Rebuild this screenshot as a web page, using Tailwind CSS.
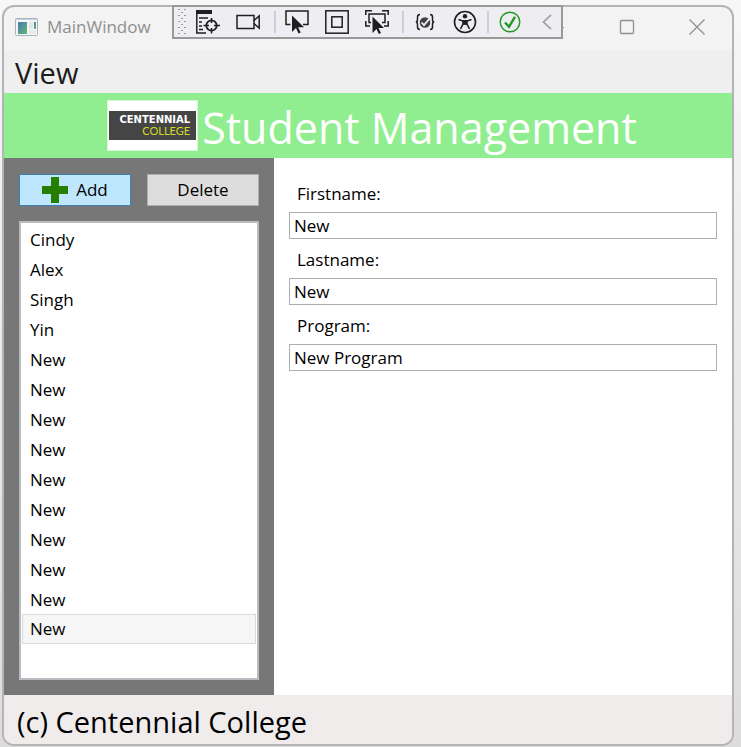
<!DOCTYPE html>
<html lang="en">
<head>
<meta charset="utf-8">
<title>MainWindow</title>
<script src="https://cdn.jsdelivr.net/npm/@tailwindcss/browser@4"></script>
</head>
<body class="flex min-h-screen flex-col bg-linear-to-b from-[#f7f7f7] to-[#dcdcdc] pt-[5px] pr-[7px] pb-px pl-[2px] font-['Open_Sans','Noto_Sans',sans-serif] text-[17px] text-black">
<div class="relative flex flex-1 flex-col rounded-xl border-2 border-[#b4b4b4] bg-[#f3f3f3]">
  <header class="flex h-[43px] items-center pb-[3px] pl-[11px] text-[#8f8f8f]">
    <svg class="mr-[9px] h-5 w-[23px]" viewBox="0 0 23 20" aria-hidden="true">
      <defs><linearGradient id="pane" x1="0" y1="0" x2="1" y2="1"><stop offset="0" stop-color="#4a79ad"/><stop offset="1" stop-color="#62b878"/></linearGradient></defs>
      <rect x=".5" y="1.5" width="22" height="17" rx="1" fill="#f5f6f7" stroke="#a9b3bc"/>
      <path d="M1 2.5h21" stroke="#c9d0d8"/>
      <rect x="3" y="5" width="9" height="12" fill="url(#pane)"/>
      <rect x="14" y="5" width="4" height="7" fill="#e6e6e6"/><rect x="19" y="5" width="2" height="7" fill="url(#pane)"/>
      <rect x="14" y="13" width="7" height="4" fill="#e9e9e9"/>
    </svg>
    <h1 class="flex-1 text-[17px]">MainWindow</h1>
    <button class="flex h-full w-[70px] items-center justify-center" aria-label="Minimize"><svg class="h-4 w-4" viewBox="0 0 16 16" stroke="currentColor"><path d="M0 8.5h16"/></svg></button>
    <button class="flex h-full w-[71px] items-center justify-center" aria-label="Maximize"><svg class="h-4 w-4" viewBox="0 0 16 16" fill="none" stroke="currentColor" stroke-width="1.3"><rect x="1.5" y="1.5" width="13" height="13" rx="1"/></svg></button>
    <button class="flex h-full w-[70px] items-center justify-center" aria-label="Close"><svg class="h-4 w-4" viewBox="0 0 16 16" stroke="currentColor" stroke-width="1.3"><path d="M.5 .5l15 15M15.500 .5l-15 15"/></svg></button>
  </header>

  <div class="absolute -top-0.5 left-[168px] flex h-[34px] items-center border-2 border-[#999] bg-[#eeeef2] pl-1 text-[#1f1f1f]" role="toolbar" aria-label="Debug tools">
    <svg class="mr-0.5 h-[26px] w-2" viewBox="0 0 8 26" aria-hidden="true">
      <defs><pattern id="grip" width="6" height="6" patternUnits="userSpaceOnUse"><rect width="2" height="1" fill="#999"/><rect x="3" y="3" width="2" height="1" fill="#999"/></pattern></defs>
      <rect width="8" height="26" fill="url(#grip)"/>
    </svg>
    <button class="flex h-7 w-10 items-center justify-center" aria-label="Live visual tree"><svg class="h-6 w-6" viewBox="0 0 24 24" fill="none" stroke="currentColor" stroke-width="1.500"><path d="M0 0h16v4H0z" fill="currentColor" stroke="none"/><path d="M.8 3v20H10M3 8h9M3 12h3M3 16h3M3 19.500h4"/><circle cx="15.500" cy="15.500" r="5.200" stroke-width="1.800"/><path d="M15.500 8v5M15.500 18v5.500M7.500 15.500h5.500M18 15.500h6"/></svg></button>
    <button class="flex h-7 w-10 items-center justify-center" aria-label="Record"><svg class="h-6 w-6" viewBox="0 0 24 24" fill="none" stroke="currentColor" stroke-width="1.500"><rect x="1" y="5.500" width="17" height="13"/><path d="M18 10.500l5.200-4.500v12L18 13.500"/></svg></button>
    <span class="mr-px ml-1.5 h-[22px] w-0.5 bg-[#cccedb]"></span>
    <button class="flex h-7 w-10 items-center justify-center" aria-label="Select element"><svg class="h-6 w-6" viewBox="0 0 24 24" fill="none" stroke="currentColor" stroke-width="1.500"><path d="M5.500 14.500H1V1h22v13.500h-5"/><path d="M7 5.500v16.500l4-4 2.500 5.500 2.200-1-2.600-5.300H19z" fill="currentColor" stroke="none"/></svg></button>
    <button class="flex h-7 w-10 items-center justify-center" aria-label="Display layout adorners"><svg class="h-6 w-6" viewBox="0 0 24 24" fill="none" stroke="currentColor" stroke-width="1.500"><rect x=".8" y=".8" width="22.400" height="22.400"/><rect x="6.800" y="6.800" width="10.400" height="10.400"/></svg></button>
    <button class="flex h-7 w-10 items-center justify-center" aria-label="Track focused element"><svg class="h-6 w-6" viewBox="0 0 24 24" fill="none" stroke="currentColor" stroke-width="1.500"><path d="M.8 5V.8H7M17 .8h6.200V5M.8 11v5H5M23.200 11v5H19"/><path d="M6 12.500H4V4h16v8.500h-3"/><path d="M7.500 6.500v16.500l4-4 2.300 5 2.200-1-2.500-5h5.500z" fill="currentColor" stroke="none"/></svg></button>
    <span class="mr-px ml-[5px] h-[22px] w-0.5 bg-[#cccedb]"></span>
    <button class="flex h-7 w-10 items-center justify-center" aria-label="Binding failures"><svg class="h-5 w-5" viewBox="0 0 20 20" fill="none" stroke="currentColor" stroke-width="1.500"><path d="M5 2.500Q2.500 2.500 2.500 5v2.500Q2.500 10 .8 10q1.700 0 1.700 2.500V15q0 2.500 2.500 2.500M15 2.500q2.500 0 2.500 2.500v2.500q0 2.500 1.700 2.500-1.700 0-1.700 2.500V15q0 2.500-2.500 2.500"/><circle cx="10" cy="10.500" r="5.300" fill="#424242" stroke="none"/><path d="M6.500 10.500l2.500 2.700 5.500-6.500" stroke="#eeeef2" stroke-width="1.800"/></svg></button>
    <button class="flex h-7 w-10 items-center justify-center" aria-label="Accessibility checker"><svg class="h-6 w-6" viewBox="0 0 24 24" fill="none" stroke="currentColor" stroke-width="1.600"><circle cx="12" cy="12" r="10.500"/><circle cx="12" cy="6.300" r="2.200" fill="currentColor" stroke="none"/><path d="M5.500 9.500L10 11v3l-2.500 5M18.500 9.500L14 11v3l2.500 5M9.500 10.800h5M10 14h4"/><path d="M10 10.500h4v4h-4z" fill="currentColor" stroke="none"/></svg></button>
    <span class="mr-px ml-0.5 h-[22px] w-0.5 bg-[#cccedb]"></span>
    <button class="flex h-7 w-10 items-center justify-center text-[#1f9a1f]" aria-label="Hot reload status"><svg class="h-[22px] w-[22px]" viewBox="0 0 22 22" fill="none" stroke="currentColor"><circle cx="11" cy="11" r="9.800" stroke-width="1.400"/><path d="M6 11.500l4 4.300 6-10" stroke-width="2.400"/></svg></button>
    <button class="flex h-7 w-[31px] items-center justify-center text-[#999]" aria-label="Collapse toolbar"><svg class="h-4 w-4" viewBox="0 0 16 16" fill="none" stroke="currentColor" stroke-width="1.600"><path d="M13 1L5.500 8l7.500 7"/></svg></button>
  </div>

  <nav class="flex h-[43px] items-center bg-[#efefef] pl-[11px] text-[#1c1c1c]">
    <button class="pt-0.5 text-[29px] leading-8">View</button>
  </nav>

  <div class="flex h-[65px] items-center justify-center gap-1 bg-[#90ee90] pl-2">
    <div class="flex h-[51px] w-[91px] flex-col justify-center border border-[#d3f8d3] bg-white px-px">
      <div class="flex h-[29px] flex-col items-end justify-center bg-[#454545] pr-1.5 text-white">
        <span class="font-['DejaVu_Sans',sans-serif] text-[10px] leading-[10px] font-bold">CENTENNIAL</span>
        <span class="font-['Lato',sans-serif] text-[11px] leading-[11px] text-[#d3dc28]">COLLEGE</span>
      </div>
    </div>
    <h2 class="pt-1 text-[43px] leading-[60px] text-white">Student Management</h2>
  </div>

  <main class="flex flex-1">
    <aside class="flex w-[270px] flex-col gap-[15px] bg-[#777] px-[15px] pt-4 pb-[15px]">
      <div class="flex h-8 gap-4">
        <button class="flex flex-1 items-center justify-center gap-2 border border-[#3c7fb1] bg-[#bee6fd]">
          <svg class="h-[26px] w-[26px]" viewBox="0 0 26 26" fill="#267f00" aria-hidden="true"><path d="M9 0h8v9h9v8h-9v9H9v-9H0V9h9z"/></svg>
          Add
        </button>
        <button class="flex-1 border border-[#adadad] bg-[#ddd]">Delete</button>
      </div>
      <ul class="flex-1 border-2 border-[#b9bbc1] bg-white p-px pt-0.5 leading-[30px]">
        <li class="px-2">Cindy</li>
        <li class="px-2">Alex</li>
        <li class="px-2">Singh</li>
        <li class="px-2">Yin</li>
        <li class="px-2">New</li>
        <li class="px-2">New</li>
        <li class="px-2">New</li>
        <li class="px-2">New</li>
        <li class="px-2">New</li>
        <li class="px-2">New</li>
        <li class="px-2">New</li>
        <li class="px-2">New</li>
        <li class="px-2">New</li>
        <li class="-mt-px border border-[#dadada] bg-[#f6f6f6] px-[7px] leading-7">New</li>
      </ul>
    </aside>
    <form class="flex flex-1 flex-col bg-white px-[15px] pt-[15px]">
      <label for="first" class="h-[39px] pl-2 leading-[42px]">Firstname:</label>
      <input id="first" value="New" class="mb-px h-[27px] border border-[#abadb3] px-1">
      <label for="last" class="h-[38px] pl-2 leading-10">Lastname:</label>
      <input id="last" value="New" class="mb-px h-[27px] border border-[#abadb3] px-1">
      <label for="program" class="h-[38px] pl-2 leading-10">Program:</label>
      <input id="program" value="New Program" class="h-[27px] border border-[#abadb3] px-1">
    </form>
  </main>

  <footer class="flex h-[49px] items-center rounded-b-[10px] bg-[#f0eceb] pt-1 pl-[13px] text-[29px]">(c) Centennial College</footer>
</div>
</body>
</html>
